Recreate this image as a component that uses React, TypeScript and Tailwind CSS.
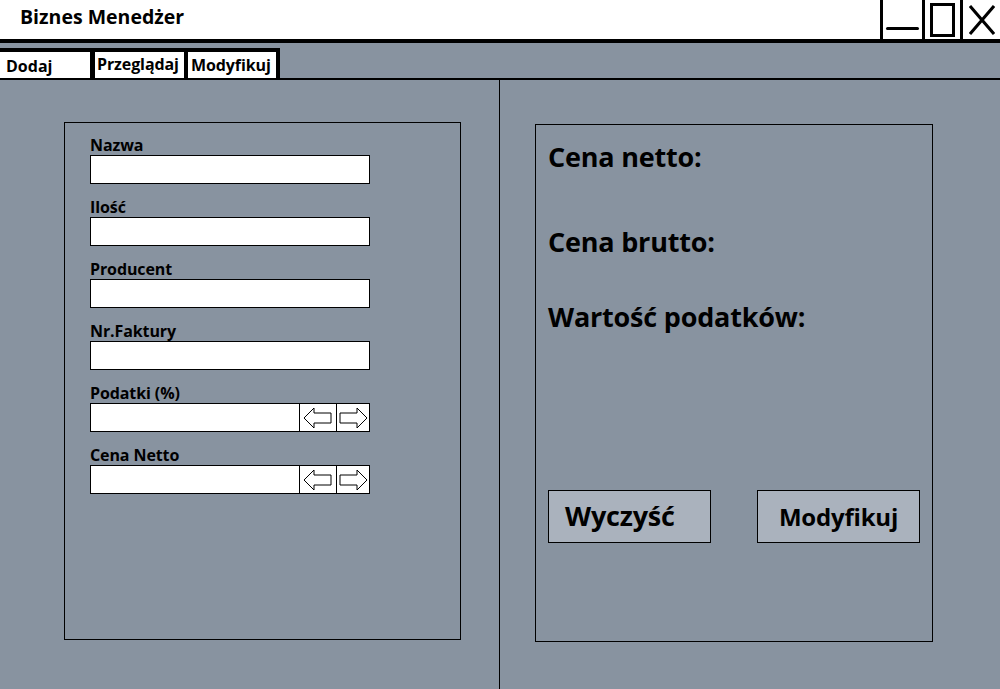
import React from "react";

const font = { fontFamily: "'Open Sans', Lato, sans-serif" };

function LeftArrow() {
  return (
    <svg width="30" height="22" viewBox="0 0 30 22" className="block">
      <polygon points="1,11 11,1 11,6 28,6 28,16 11,16 11,21" fill="white" stroke="black" strokeWidth="1" />
    </svg>
  );
}
function RightArrow() {
  return (
    <svg width="30" height="22" viewBox="0 0 30 22" className="block">
      <polygon points="29,11 19,1 19,6 2,6 2,16 19,16 19,21" fill="white" stroke="black" strokeWidth="1" />
    </svg>
  );
}

function Field({ label, spinner }: { label: string; spinner?: boolean }) {
  return (
    <div className="flex flex-col">
      <div className="text-[16px] font-bold leading-[17px] text-black h-[17px] tracking-[-0.1px]">{label}</div>
      <div className="flex h-[29px] w-[280px] border border-black bg-white mt-[1px]">
        <div className="flex-1" />
        {spinner && (
          <>
            <div className="w-[37px] border-l border-black flex items-center justify-center">
              <LeftArrow />
            </div>
            <div className="w-[33px] border-l border-black flex items-center justify-center">
              <RightArrow />
            </div>
          </>
        )}
      </div>
    </div>
  );
}

export default function App() {
  return (
    <div className="w-[1000px] h-[689px] bg-[#8893a0] flex flex-col overflow-hidden" style={font}>
      {/* title bar */}
      <div className="h-[43px] bg-white border-b-[4px] border-black flex items-stretch">
        <div className="flex-1 pl-[20px] flex items-center text-[19.5px] font-bold text-black pb-[6px]">Biznes Menedżer</div>
        <div className="flex items-stretch">
          <div className="w-[42px] border-l-[3px] border-black flex items-end justify-center pb-[9px]">
            <div className="w-[33px] h-[3px] bg-black rounded-full" />
          </div>
          <div className="w-[38px] border-l-[3px] border-black flex items-center justify-center">
            <div className="w-[25px] h-[34px] border-[3px] border-black" />
          </div>
          <div className="w-[40px] border-l-[3px] border-black flex items-center justify-center">
            <svg width="26" height="30" viewBox="0 0 26 30">
              <path d="M1 1 L25 29 M25 1 L1 29" stroke="black" strokeWidth="3" />
            </svg>
          </div>
        </div>
      </div>
      {/* tabs */}
      <div className="mt-[5px] flex border-b-[2px] border-black">
        <div className="flex bg-black pt-[4px] pr-[4px] gap-[4px]">
          <div className="w-[90px] h-[26px] bg-white text-[16px] font-bold leading-[26px] pl-[6px] pt-[1px]">Dodaj</div>
          <div className="w-[89px] h-[26px] bg-white text-[16px] font-bold leading-[24px] pl-[2px] ml-[1px] tracking-[-0.1px]">Przeglądaj</div>
          <div className="w-[88px] h-[26px] bg-white text-[16px] font-bold leading-[26px] pl-[3px] tracking-[-0.1px]">Modyfikuj</div>
        </div>
      </div>
      {/* body */}
      <div className="flex-1 flex">
        <div className="w-[500px] border-r border-black pl-[64px] pt-[42px]">
          <div className="w-[397px] h-[518px] border border-black pl-[25px] pt-[14px] flex flex-col gap-[15px]">
            <Field label="Nazwa" />
            <Field label="Ilość" />
            <Field label="Producent" />
            <Field label="Nr.Faktury" />
            <Field label="Podatki (%)" spinner />
            <Field label="Cena Netto" spinner />
          </div>
        </div>
        <div className="flex-1 pl-[35px] pt-[44px]">
          <div className="w-[398px] h-[518px] border border-black flex flex-col px-[12px]">
            <div className="text-[27px] font-bold text-black leading-[30px] mt-[17px] h-[30px] tracking-[-0.2px]">Cena netto:</div>
            <div className="text-[27px] font-bold text-black leading-[30px] mt-[55px] tracking-[-0.2px]">Cena brutto:</div>
            <div className="text-[27px] font-bold text-black leading-[30px] mt-[45px] tracking-[-0.2px]">Wartość podatków:</div>
            <div className="flex justify-between mt-[158px]">
              <div className="w-[163px] h-[53px] border border-black bg-[#aab2bd] flex items-center pl-[16px] text-[27px] font-bold text-black tracking-[-0.2px]">Wyczyść</div>
              <div className="w-[163px] h-[53px] border border-black bg-[#aab2bd] flex items-center justify-center text-[24px] font-bold text-black tracking-[-0.2px]">Modyfikuj</div>
            </div>
          </div>
        </div>
      </div>
    </div>
  );
}
